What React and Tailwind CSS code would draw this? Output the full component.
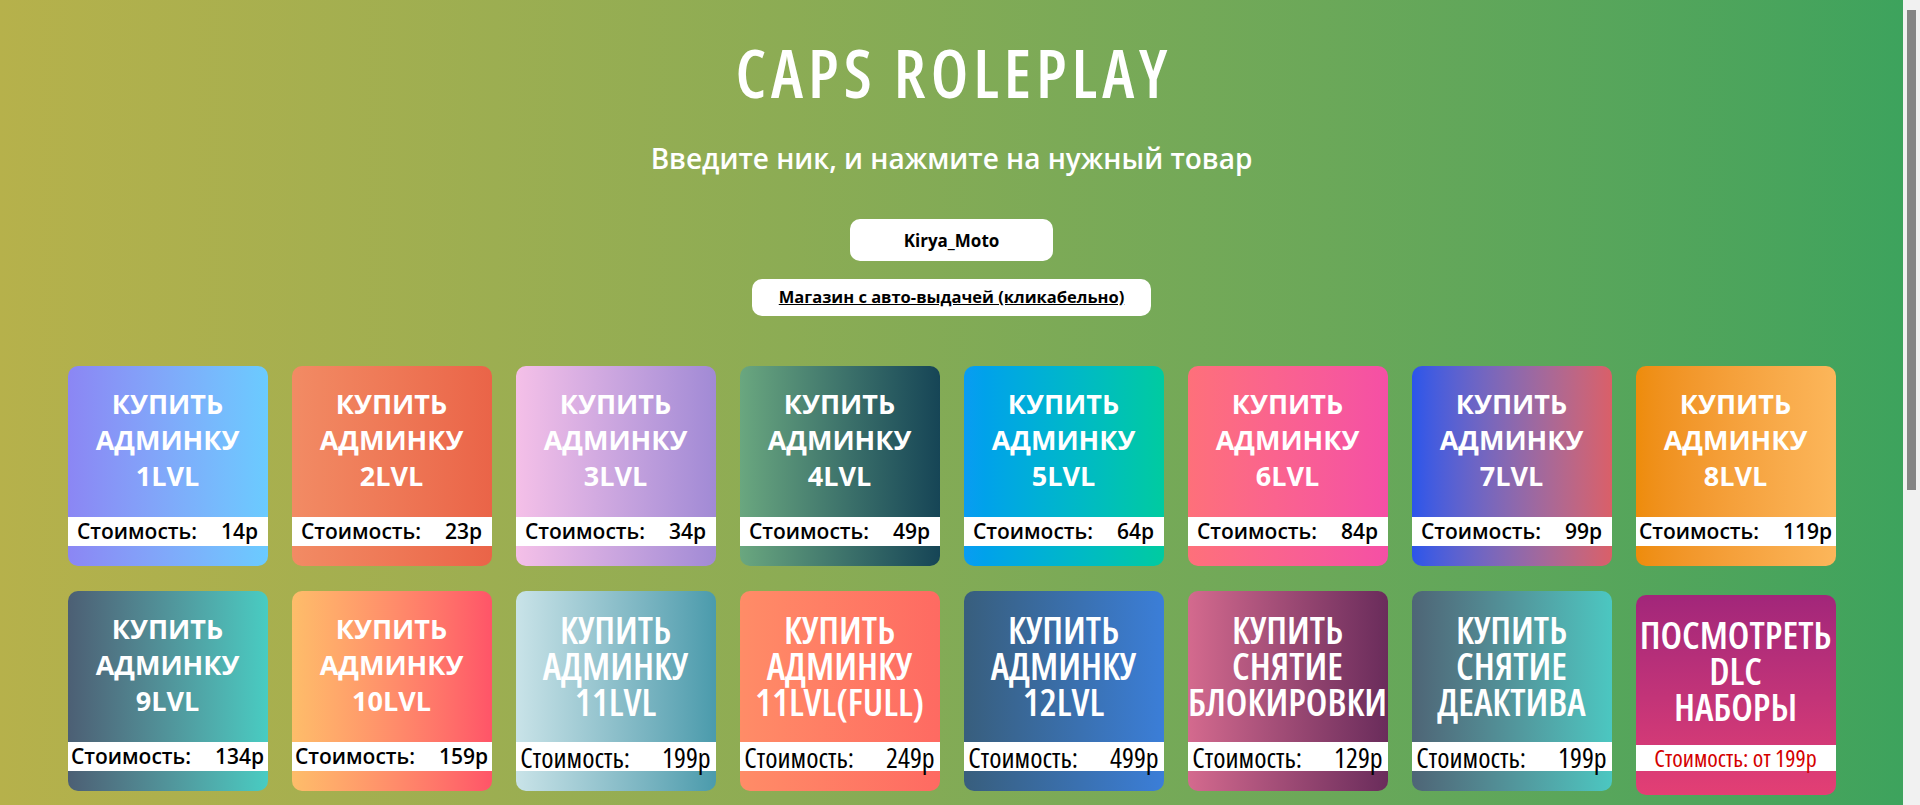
import React from 'react';

const items = [
    { title: ['КУПИТЬ', 'АДМИНКУ', '1LVL'], price: '14р', bg: 'bg-linear-to-r from-[#8b86f4] to-[#6acbff]' },
    { title: ['КУПИТЬ', 'АДМИНКУ', '2LVL'], price: '23р', bg: 'bg-linear-to-r from-[#f28b64] to-[#ea6448]' },
    { title: ['КУПИТЬ', 'АДМИНКУ', '3LVL'], price: '34р', bg: 'bg-linear-to-r from-[#f5c0e8] to-[#a18ad5]' },
    { title: ['КУПИТЬ', 'АДМИНКУ', '4LVL'], price: '49р', bg: 'bg-linear-to-r from-[#6aa77f] to-[#164556]' },
    { title: ['КУПИТЬ', 'АДМИНКУ', '5LVL'], price: '64р', bg: 'bg-linear-to-r from-[#0a9cf2] to-[#00cba0]' },
    { title: ['КУПИТЬ', 'АДМИНКУ', '6LVL'], price: '84р', bg: 'bg-linear-to-r from-[#fe707a] to-[#f54fa5]' },
    { title: ['КУПИТЬ', 'АДМИНКУ', '7LVL'], price: '99р', bg: 'bg-linear-to-r from-[#2b55ea] to-[#da5f68]' },
    { title: ['КУПИТЬ', 'АДМИНКУ', '8LVL'], price: '119р', bg: 'bg-linear-to-r from-[#ee8c0a] to-[#fcb65a]' },
    { title: ['КУПИТЬ', 'АДМИНКУ', '9LVL'], price: '134р', bg: 'bg-linear-to-r from-[#4c5f74] to-[#48ccc2]' },
    { title: ['КУПИТЬ', 'АДМИНКУ', '10LVL'], price: '159р', bg: 'bg-linear-to-r from-[#fdbd6a] to-[#ff5468]' },
    { title: ['КУПИТЬ', 'АДМИНКУ', '11LVL'], price: '199р', bg: 'bg-linear-to-r from-[#c9e3e8] to-[#4a9bac]', narrow: true },
    { title: ['КУПИТЬ', 'АДМИНКУ', '11LVL(FULL)'], price: '249р', bg: 'bg-linear-to-r from-[#ff8c67] to-[#fe6a62]', narrow: true },
    { title: ['КУПИТЬ', 'АДМИНКУ', '12LVL'], price: '499р', bg: 'bg-linear-to-r from-[#385e7d] to-[#3b7ed8]', narrow: true },
    { title: ['КУПИТЬ', 'СНЯТИЕ', 'БЛОКИРОВКИ'], price: '129р', bg: 'bg-linear-to-r from-[#d46a8e] to-[#6a2c5b]', narrow: true },
    { title: ['КУПИТЬ', 'СНЯТИЕ', 'ДЕАКТИВА'], price: '199р', bg: 'bg-linear-to-r from-[#4e6576] to-[#4bc7c1]', narrow: true },
];

function Card({ item }) {
    // the last row uses a narrow face, bigger size
    const titleCls = item.narrow ? 'text-[38px] font-semibold font-stretch-condensed' : 'text-[27px] font-bold';
    const priceCls = item.narrow ? 'text-[28px] font-medium font-stretch-condensed gap-[32px]' : 'text-[21px] font-semibold gap-[24px]';
    return (
        <div className={`flex h-[200px] flex-col overflow-hidden rounded-[10px] ${item.bg}`}>
            <div className={`flex h-[151px] flex-col items-center justify-center pb-[3px] text-center leading-[36px] text-white ${titleCls}`}>
                {item.title.map((t) => (
                    <span key={t} className="whitespace-nowrap">{t}</span>
                ))}
            </div>
            <div className={`flex h-[29px] items-center justify-center bg-white leading-none text-black ${priceCls}`}>
                <span>Стоимость:</span>
                <span>{item.price}</span>
            </div>
        </div>
    );
}

function DlcCard() {
    return (
        <div className="mt-[4px] flex h-[200px] flex-col overflow-hidden rounded-[10px] bg-linear-to-b from-[#a2267a] to-[#e33f74] font-stretch-condensed">
            <div className="flex h-[150px] flex-col items-center justify-center text-center text-[38px] font-semibold leading-[36px] text-white">
                <span>ПОСМОТРЕТЬ</span>
                <span>DLC</span>
                <span>НАБОРЫ</span>
            </div>
            <div className="flex h-[26px] items-center justify-center bg-white text-[24px] font-medium leading-none text-[#d40000]">
                Стоимость: от 199р
            </div>
        </div>
    );
}

export default function App() {
    return (
        <div className="flex h-screen overflow-hidden font-['Open_Sans',sans-serif]">
            <main className="flex-1 overflow-hidden bg-linear-to-r from-[#b6b14b] to-[#3da35d]">
                <div className="flex flex-col items-center pt-[39px]">
                    <h1 className="pl-[5px] text-[66px] font-semibold leading-none tracking-[5px] text-white font-stretch-condensed">CAPS ROLEPLAY</h1>
                    <p className="mt-[32px] text-[28px] font-semibold text-white">Введите ник, и нажмите на нужный товар</p>
                    <input
                        type="text"
                        defaultValue="Kirya_Moto"
                        className="mt-[40px] h-[42px] w-[203px] rounded-[10px] bg-white text-center text-[17px] font-bold text-black outline-none"
                    />
                    <a href="#" className="mt-[18px] flex h-[37px] w-[399px] items-center justify-center rounded-[10px] bg-white text-[16.5px] font-bold text-black underline">
                        Магазин с авто-выдачей (кликабельно)
                    </a>
                </div>

                <div className="mx-auto mt-[50px] grid w-[1768px] grid-cols-8 gap-x-6 gap-y-[25px] pb-[40px]">
                    {items.map((item, i) => (
                        <Card key={i} item={item} />
                    ))}
                    <DlcCard />
                </div>
            </main>

            {/* page scrollbar */}
            <div className="flex w-[17px] justify-center bg-[#f1f1f1]">
                <div className="mt-[10px] h-[480px] w-[9px] bg-[#858585]" />
            </div>
        </div>
    );
}
